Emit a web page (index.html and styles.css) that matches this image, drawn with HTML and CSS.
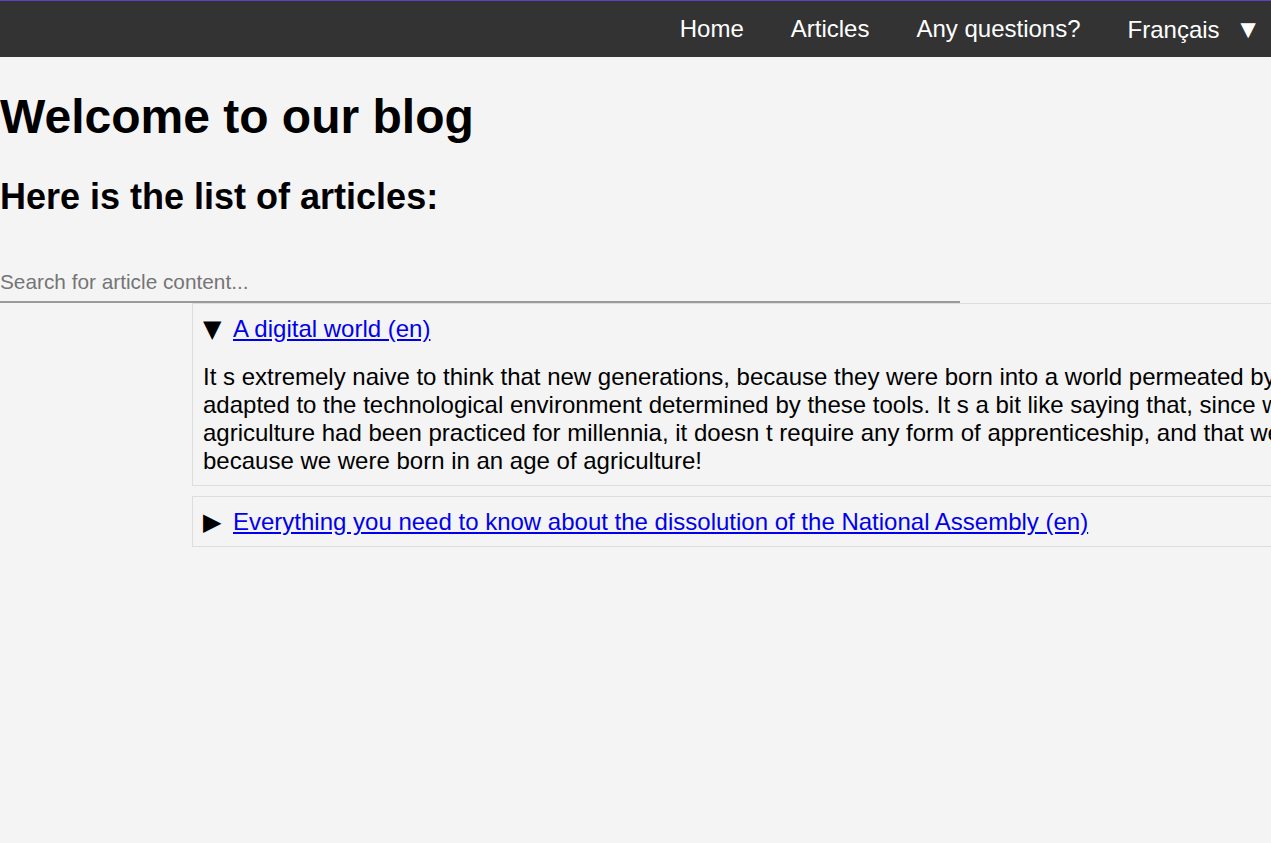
FILE: index.html
```html
<!DOCTYPE html>
<html lang="en">
<head>
<meta charset="utf-8">
<title>Blog</title>
<link rel="stylesheet" href="styles.css">
</head>
<body>
<header class="topbar">
  <nav class="nav">
    <a class="nav-link" href="#">Home</a>
    <a class="nav-link" href="#">Articles</a>
    <a class="nav-link" href="#">Any questions?</a>
    <span class="lang">Français <span class="lang-arrow">▼</span></span>
  </nav>
</header>
<main class="content">
  <h1 class="title">Welcome to our blog</h1>
  <h2 class="subtitle">Here is the list of articles:</h2>
  <input class="search" type="text" placeholder="Search for article content...">
  <section class="articles">
    <details class="article" open>
      <summary class="article-summary"><a href="#">A digital world (en)</a></summary>
      <p class="article-body">It s extremely naive to think that new generations, because they were born into a world permeated by digital tools, are naturally adapted to the technological environment determined by these tools. It s a bit like saying that, since we were born where agriculture had been practiced for millennia, it doesn t require any form of apprenticeship, and that we all know how to farm because we were born in an age of agriculture!</p>
    </details>
    <details class="article">
      <summary class="article-summary"><a href="#">Everything you need to know about the dissolution of the National Assembly (en)</a></summary>
      <p class="article-body">The President of the Republic may, after consulting the Prime Minister and the Presidents of the Assemblies, declare the dissolution of the National Assembly.</p>
    </details>
  </section>
</main>
</body>
</html>
```
FILE: styles.css
```css
html, body {
  overflow-x: hidden;
}
body {
  margin: 0;
  background: #f4f4f4;
  color: #000;
  font-family: "Liberation Sans", Arial, sans-serif;
  font-size: 24px;
}
.topbar {
  background: #333333;
  border-top: 1px solid #5f3fc9;
  height: 56px;
}
.nav {
  display: flex;
  justify-content: flex-end;
  align-items: center;
  height: 56px;
  gap: 47px;
  padding-right: 10px;
}
.nav-link, .lang {
  color: #ffffff;
  text-decoration: none;
  font-size: 24px;
  line-height: 56px;
}
.lang-arrow {
  margin-left: 9px;
  font-size: 26px;
}
.title {
  font-size: 48px;
  margin: 32px 0;
}
.subtitle {
  font-size: 36px;
  margin: 30px 0 0;
}
.search {
  display: block;
  box-sizing: border-box;
  width: 960px;
  height: 40px;
  margin: 45px 0 0;
  padding: 7px 0;
  border: none;
  border-bottom: 2px solid #9a9a9a;
  background: transparent;
  font-family: "Liberation Sans", Arial, sans-serif;
  font-size: 20.8px;
  line-height: 24px;
  outline: none;
}
.search::placeholder {
  color: #757575;
}
.articles {
  margin-left: 192px;
  width: 1390px;
}
.article {
  box-sizing: border-box;
  border: 1px solid #dddddd;
  padding: 11px 10px 10px;
  margin-bottom: 10px;
}
.article-summary {
  list-style: none;
  cursor: pointer;
}
.article-summary::-webkit-details-marker {
  display: none;
}
.article-summary::before {
  content: "▶";
  display: inline-block;
  width: 30px;
  line-height: 1;
  font-family: "DejaVu Sans", sans-serif;
}
.article[open] > .article-summary::before {
  content: "▼";
}
.article-summary a {
  color: #0000ee;
}
.article-body {
  margin: 20px 0 0;
}
```
